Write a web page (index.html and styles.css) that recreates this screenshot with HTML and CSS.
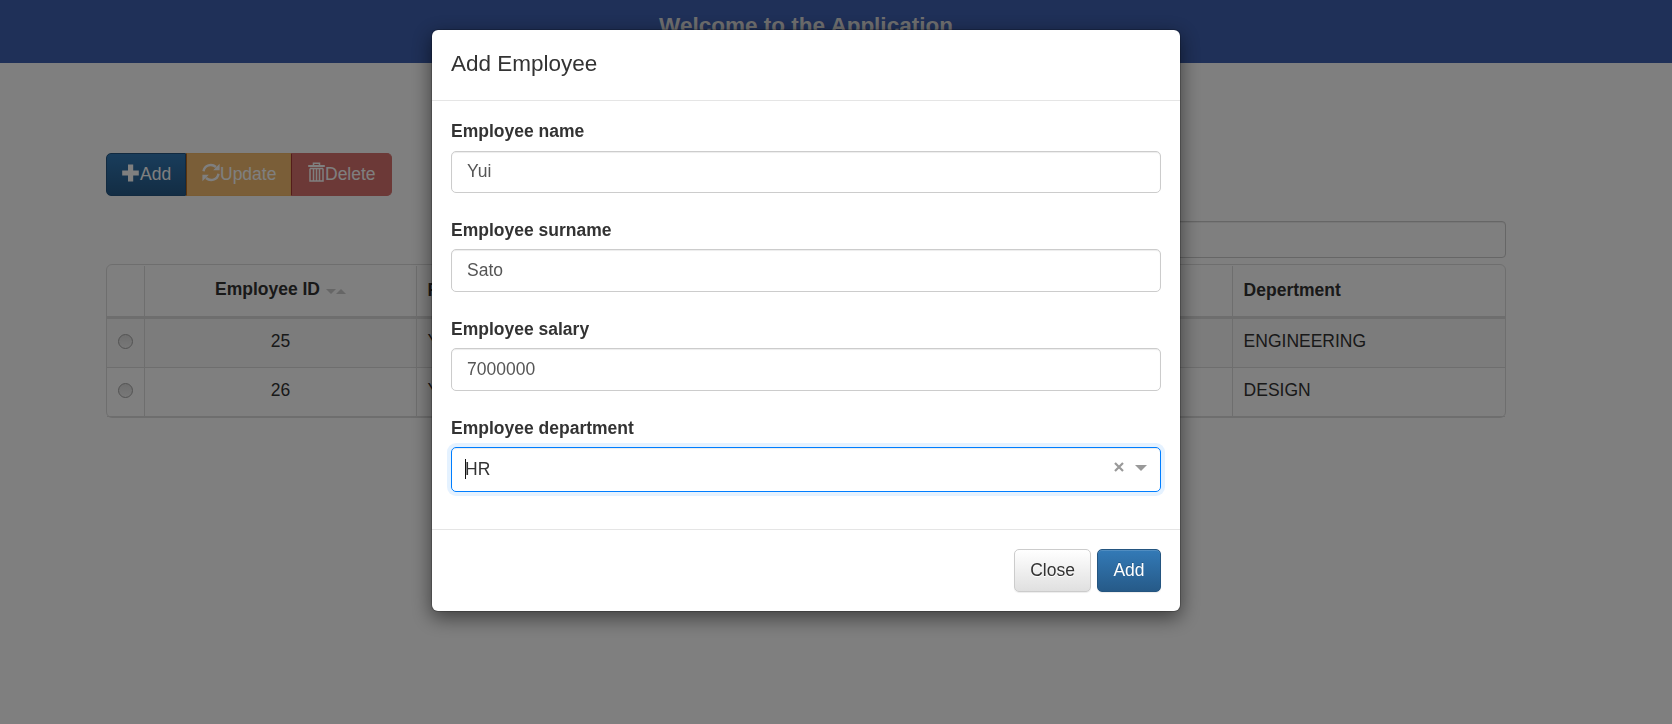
FILE: index.html
```html
<!DOCTYPE html>
<html lang="en">
<head>
<meta charset="utf-8">
<title>Employees</title>
<link rel="stylesheet" href="styles.css">
</head>
<body>
<header class="banner"><h1 class="banner-title">Welcome to the Application</h1></header>
<main class="container">
  <div class="btn-group">
    <button class="tool tool-add"><svg class="ico-plus" viewBox="0 0 17 18"><path d="M6 .5h5.200v5.900h5.600v5H11.200v6H6v-6H.2v-5H6z"/></svg>Add</button>
    <button class="tool tool-update"><svg class="ico-refresh" viewBox="0 0 18 19"><path d="M1.500 8.300C2.500 2 9.500 .3 14 4" class="arc"/><path d="M16.500 10.700C15.500 17 8.500 18.700 4 15" class="arc"/><path d="M17.600 .8v6.400h-6.400zM.4 18.200v-6.400h6.400z"/></svg>Update</button>
    <button class="tool tool-delete"><svg class="ico-trash" viewBox="0 0 17 20"><path d="M5.500 3V1.200h6V3" class="line"/><path d="M.2 3h16.600v2H.2z"/><path d="M2 6.500v12.500h13V6.500M5.500 7v12M8.500 7v12M11.500 7v12M2 6.600h13" class="line"/></svg>Delete</button>
  </div>
  <div class="search-row"><input class="search" type="text" aria-label="Search"></div>
  <div class="table">
    <div class="row head"><div class="cell"></div><div class="cell mid">Employee ID<span class="sort"><i class="down"></i><i class="up"></i></span></div><div class="cell">First Name</div><div class="cell"></div><div class="cell"></div><div class="cell">Depertment</div></div>
    <div class="row striped"><div class="cell pick"><i class="radio"></i></div><div class="cell mid">25</div><div class="cell">Yui</div><div class="cell"></div><div class="cell"></div><div class="cell">ENGINEERING</div></div>
    <div class="row"><div class="cell pick"><i class="radio"></i></div><div class="cell mid">26</div><div class="cell">Yui</div><div class="cell"></div><div class="cell"></div><div class="cell">DESIGN</div></div>
  </div>
</main>
<div class="backdrop">
  <section class="modal">
    <div class="modal-head">Add Employee</div>
    <div class="modal-body">
      <div class="field"><label class="label">Employee name</label><div class="control">Yui</div></div>
      <div class="field"><label class="label">Employee surname</label><div class="control">Sato</div></div>
      <div class="field"><label class="label">Employee salary</label><div class="control">7000000</div></div>
      <div class="field"><label class="label">Employee department</label><div class="control select"><i class="caret"></i><span class="value">HR</span><svg class="clear" viewBox="0 0 10 10"><path d="M1 1l8 8M9 1l-8 8"/></svg><i class="arrow"></i></div></div>
    </div>
    <div class="modal-foot"><button class="btn btn-close">Close</button><button class="btn btn-add">Add</button></div>
  </section>
</div>
</body>
</html>
```
FILE: styles.css
```css
* { box-sizing: border-box; }
body { margin: 0; height: 724px; overflow: hidden; background: #fff; color: #333; font: 17.5px/25px "Liberation Sans", Arial, sans-serif; }
button, input { font: inherit; }
.banner { height: 63px; background: #3e60b0; text-align: center; padding-top: 11px; }
.banner-title { margin: 0 0 0 -60px; font-size: 22.5px; line-height: 30px; color: #dedede; }
.container { width: 1400px; margin: 90px 0 0 106px; }
.btn-group { display: flex; width: 286px; height: 43px; }
.tool { display: flex; align-items: center; padding: 0 0 0 15px; border: 1px solid; color: #fff; white-space: nowrap; text-align: left; }
.tool-add { width: 80px; background: linear-gradient(#337ab7, #265a88); border-color: #245580; border-radius: 5px 0 0 5px; }
.tool-update { width: 105px; background: #f4bd71; border-color: #f3b968; color: #fff; border-left-color: #b5691c; }
.tool-delete { width: 101px; padding-left: 16px; background: #d9736f; border-color: #d9736f; border-left-color: #a93b34; border-radius: 0 5px 5px 0; }
.tool svg { flex: none; fill: currentColor; }
.ico-plus { width: 17px; height: 18px; margin: -4px 1px 0 0; }
.ico-refresh { width: 18px; height: 19px; margin-top: -4px; }
.ico-trash { width: 17px; height: 20px; margin-top: -5px; }
.arc { fill: none; stroke: currentColor; stroke-width: 2.4; }
.line { fill: none; stroke: currentColor; stroke-width: 1.5; }
.search-row { display: flex; justify-content: flex-end; padding-top: 25px; }
.search { width: 680px; height: 37px; border: 1px solid #ccc; border-radius: 4px; background: #fff; box-shadow: inset 0 1px 1px rgba(0,0,0,.075); }
.table { margin-top: 6px; height: 154px; border: 1px solid #ddd; border-radius: 6px; padding: 1px 1px 0 0; }
.row { display: grid; grid-template-columns: 37px repeat(5, 272px); height: 49px; border-bottom: 1px solid #ddd; width: 1398px; }
.row.head { height: 53px; border-bottom: 3px solid #ddd; font-weight: bold; }
.striped { background: #f9f9f9; }
.cell { border-right: 1px solid #ddd; padding: 10px 10px 0 10.6px; }
.cell:first-child { width: 38px; }
.cell:not(:first-child) { margin-left: 1px; margin-right: -1px; }
.cell:last-child { border-right: 0; margin-right: 0; }
.head .cell { padding-top: 12px; }
.head .mid { padding: 11px 0 0; }
.mid { text-align: center; padding-left: 0; padding-right: 0; }
.sort { display: inline-flex; align-items: center; margin-left: 6px; vertical-align: 1px; }
.down, .up { width: 0; height: 0; border: 5px solid transparent; }
.down { border-top-color: #ccc; border-bottom: 0; }
.up { border-bottom-color: #ccc; border-top: 0; }
.pick { padding: 15px 0 0 11px; }
.radio { display: block; width: 15px; height: 15px; border: 1px solid #a5a5a5; border-radius: 50%; background: linear-gradient(#ddd, #f0f0f0); }
.backdrop { position: fixed; inset: 0; background: rgba(0,0,0,.5); padding: 29px 0 0 431px; }
.modal { width: 750px; height: 583px; border: 1px solid rgba(0,0,0,.2); border-radius: 7px; background: #fff; background-clip: padding-box; box-shadow: 0 6px 19px rgba(0,0,0,.5); }
.modal-head { height: 71px; border-bottom: 1px solid #e5e5e5; padding: 18px 19px; font-size: 22.5px; line-height: 32px; }
.modal-body { height: 428px; padding: 18px 19px 0; }
.field { height: 99px; }
.label { display: block; height: 31px; font-weight: bold; }
.field:first-child .label { height: 32px; }
.control { height: 43px; border: 1px solid #ccc; border-radius: 5px; padding: 8px 15px; color: #555; box-shadow: inset 0 1px 1px rgba(0,0,0,.075); }
.field:first-child .control { height: 42px; padding-top: 7px; }
.select { display: flex; align-items: center; height: 45px; padding: 0 12px 0 13px; border-color: #007eff; color: #333; box-shadow: inset 0 1px 1px rgba(0,0,0,.075), 0 0 0 4px rgba(0,126,255,.1); }
.caret { width: 1px; height: 20px; margin-bottom: 2px; background: #111; }
.value { flex: 1; margin-left: -1px; }
.clear { width: 10px; height: 10px; margin: 0 11px 5px 0; stroke: #999; stroke-width: 2.2; }
.arrow { border: 6px solid transparent; border-top-color: #999; border-bottom: 0; margin: 0 1px 3px 0; }
.modal-foot { height: 82px; border-top: 1px solid #e5e5e5; padding: 19px; display: flex; justify-content: flex-end; gap: 6px; }
.btn { height: 43px; border-radius: 5px; border: 1px solid; padding: 0; box-shadow: inset 0 1px 0 rgba(255,255,255,.15), 0 1px 1px rgba(0,0,0,.075); }
.btn-close { width: 77px; border-color: #ccc; color: #333; background: linear-gradient(#fff, #e0e0e0); text-shadow: 0 1px 0 #fff; }
.btn-add { width: 64px; border-color: #245580; color: #fff; background: linear-gradient(#337ab7, #265a88); text-shadow: 0 -1px 0 rgba(0,0,0,.2); }
```
